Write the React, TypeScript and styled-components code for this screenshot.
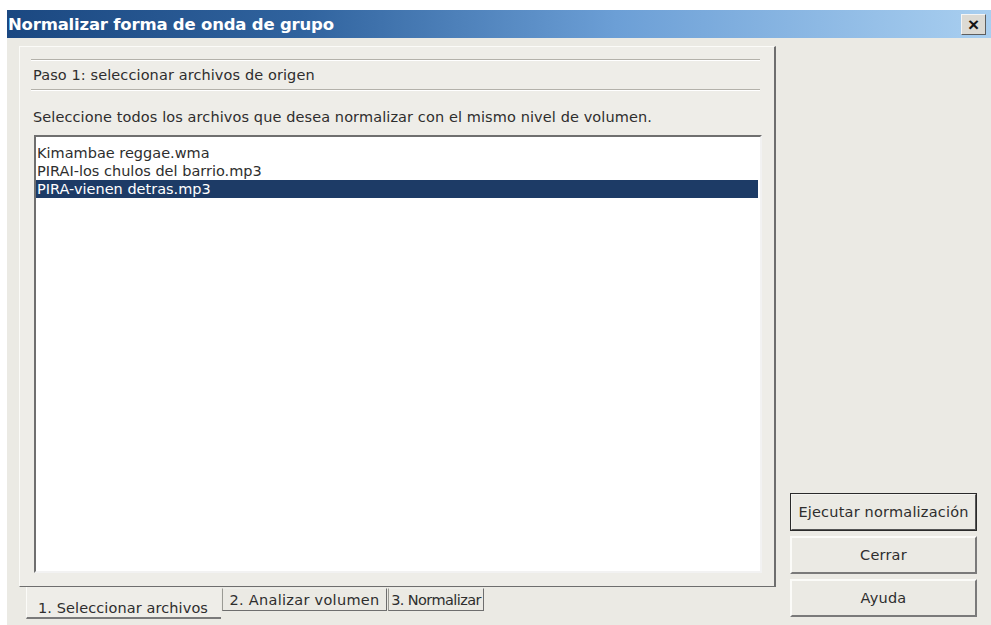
import React from "react";
import styled, { createGlobalStyle } from "styled-components";

const GlobalStyle = createGlobalStyle`
  html, body {
    margin: 0;
    padding: 0;
    background: #ffffff;
    overflow: hidden;
  }
  body {
    font-family: "DejaVu Sans", Verdana, sans-serif;
    font-size: 14.5px;
    color: #2e2e2e;
  }
`;

const Window = styled.div`
  margin: 10px 0 0 7px;
  width: 984px;
  height: 615px;
  background: #ebeae4;
  display: flex;
  flex-direction: column;
`;

const TitleBar = styled.div`
  height: 28px;
  flex: none;
  display: flex;
  align-items: center;
  justify-content: space-between;
  background: linear-gradient(90deg, #1b4881 0%, #30639e 30%, #6c9fd6 62%, #a9cff0 100%);
`;

const Title = styled.span`
  color: #ffffff;
  font-weight: bold;
  font-size: 16.5px;
  letter-spacing: -0.2px;
  padding-left: 1px;
`;

const CloseButton = styled.div`
  width: 25px;
  height: 21px;
  margin-right: 5px;
  box-sizing: border-box;
  background: #dcdad4;
  border: 1px solid;
  border-color: #f4f4f4 #5e5e5e #5e5e5e #f4f4f4;
  display: flex;
  align-items: center;
  justify-content: center;
  color: #151515;
  font-family: "Liberation Sans", Arial, sans-serif;
  font-weight: bold;
  font-size: 19px;
  line-height: 1;
`;

const Body = styled.div`
  flex: 1;
  display: flex;
  padding: 8px 14px 0 12px;
`;

const LeftColumn = styled.div`
  width: 757px;
  display: flex;
  flex-direction: column;
`;

const Panel = styled.div`
  height: 541px;
  box-sizing: border-box;
  display: flex;
  flex-direction: column;
  border: 1px solid;
  border-color: #fbfbf8 #6e6e6e #6e6e6e #fbfbf8;
  border-right-width: 2px;
  background: #eeede8;
`;

const StepHeader = styled.div`
  margin: 12px 14px 0 11px;
  height: 29px;
  border-top: 1px solid #b3b1aa;
  border-bottom: 1px solid #b3b1aa;
  box-shadow: 0 1px 0 #ffffff, inset 0 1px 0 #ffffff;
  display: flex;
  align-items: center;
  padding-left: 2px;
  letter-spacing: 0.1px;
`;

const Description = styled.div`
  padding: 19px 0 10px 13px;
  letter-spacing: 0.1px;
`;

const ListBox = styled.div`
  flex: 1;
  margin: 0 12px 13px 14px;
  background: #ffffff;
  border: 2px solid;
  border-color: #6f6f6f #f2f2f2 #f2f2f2 #6f6f6f;
  padding-top: 7px;
`;

const ListItem = styled.div<{ $selected?: boolean }>`
  height: 18px;
  line-height: 18px;
  padding-left: 1px;
  margin-right: 2px;
  color: ${(p) => (p.$selected ? "#ffffff" : "#2e2e2e")};
  background: ${(p) => (p.$selected ? "#1d3b66" : "transparent")};
`;

const TabRow = styled.div`
  display: flex;
  align-items: flex-start;
  padding-left: 7px;
  margin-top: 1px;
`;

const Tab = styled.div<{ $active?: boolean; $width: number; $spacing?: number }>`
  box-sizing: border-box;
  width: ${(p) => p.$width}px;
  display: flex;
  align-items: center;
  justify-content: center;
  white-space: nowrap;
  letter-spacing: ${(p) => p.$spacing ?? 0.1}px;
  ${(p) =>
    p.$active
      ? `
    height: 32px;
    padding: 11px 2px 0 0;
    border-left: 1px solid #fbfbf8;
    border-bottom: 2px solid #7a7a7a;
    margin-top: -1px;
    background: #eeede8;
  `
      : `
    height: 23px;
    border: 1px solid;
    border-color: #eeeeea #6e6e6e #6e6e6e #9a9a94;
    margin-left: 1px;
  `}
`;

const ButtonColumn = styled.div`
  margin-left: auto;
  width: 187px;
  display: flex;
  flex-direction: column;
  justify-content: flex-end;
  gap: 5px;
  padding-bottom: 8px;
`;

const Button = styled.div<{ $default?: boolean }>`
  height: 38px;
  box-sizing: border-box;
  display: flex;
  align-items: center;
  justify-content: center;
  letter-spacing: 0.2px;
  background: #ebeae4;
  border: 2px solid;
  border-color: #fbfbf8 #7a7a7a #7a7a7a #fbfbf8;
  ${(p) =>
    p.$default
      ? `
    outline: 1px solid #2a2a2a;
    outline-offset: -1px;
    border-color: #f4f4f0 #555555 #555555 #f4f4f0;
  `
      : ""}
`;

const files = [
  { name: "Kimambae reggae.wma", selected: false },
  { name: "PIRAI-los chulos del barrio.mp3", selected: false },
  { name: "PIRA-vienen detras.mp3", selected: true },
];

export default function App() {
  return (
    <>
      <GlobalStyle />
      <Window>
        <TitleBar>
          <Title>Normalizar forma de onda de grupo</Title>
          <CloseButton>×</CloseButton>
        </TitleBar>
        <Body>
          <LeftColumn>
            <Panel>
              <StepHeader>Paso 1: seleccionar archivos de origen</StepHeader>
              <Description>
                Seleccione todos los archivos que desea normalizar con el mismo nivel de volumen.
              </Description>
              <ListBox>
                {files.map((f) => (
                  <ListItem key={f.name} $selected={f.selected}>
                    {f.name}
                  </ListItem>
                ))}
              </ListBox>
            </Panel>
            <TabRow>
              <Tab $active $width={195}>1. Seleccionar archivos</Tab>
              <Tab $width={165} $spacing={0.3}>2. Analizar volumen</Tab>
              <Tab $width={96} $spacing={-0.6}>3. Normalizar</Tab>
            </TabRow>
          </LeftColumn>
          <ButtonColumn>
            <Button $default>Ejecutar normalización</Button>
            <Button>Cerrar</Button>
            <Button>Ayuda</Button>
          </ButtonColumn>
        </Body>
      </Window>
    </>
  );
}
